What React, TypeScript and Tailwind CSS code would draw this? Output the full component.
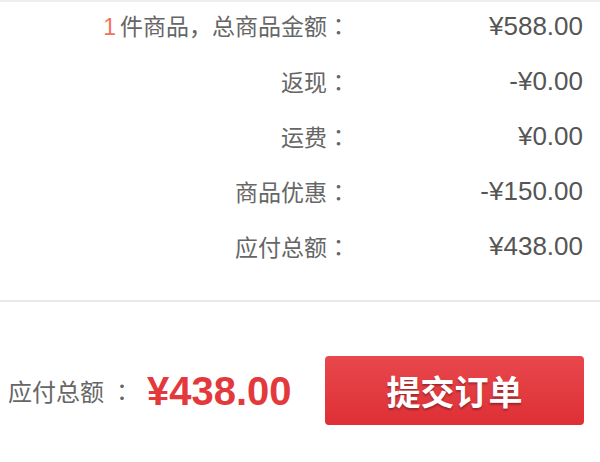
import React from "react";

const Colon = ({ className = "" }: { className?: string }) => (
  <span className={`font-['Noto_Sans_CJK_JP',sans-serif] ${className}`}>：</span>
);

const rows: { label: React.ReactNode; value: string }[] = [
  {
    label: (
      <>
        <span className="text-[#f4725c] font-['Liberation_Sans',sans-serif] mr-[4px]">1</span>
        件商品，总商品金额<Colon />
      </>
    ),
    value: "¥588.00",
  },
  { label: <>返现<Colon /></>, value: "-¥0.00" },
  { label: <>运费<Colon /></>, value: "¥0.00" },
  { label: <>商品优惠<Colon /></>, value: "-¥150.00" },
  { label: <>应付总额<Colon /></>, value: "¥438.00" },
];

export default function App() {
  return (
    <div className="w-[600px] h-[462px] bg-white border-t-2 border-[#eeeeee] font-['Noto_Sans_CJK_SC',sans-serif]">
      <div className="flex flex-col">
        {rows.map((r, i) => (
          <div key={i} className="flex h-[55px] pb-[7px] items-center">
            <div className="w-[350px] text-right text-[23px] leading-none text-[#666666] whitespace-nowrap">
              {r.label}
            </div>
            <div className="flex-1 text-right pr-[17px] text-[26px] leading-none text-[#555555] font-['Liberation_Sans',sans-serif]">
              {r.value}
            </div>
          </div>
        ))}
      </div>

      <div className="mt-[23px] border-t-2 border-[#e8e8e8]" />

      <div className="flex items-center pt-[54px] pl-[8px] pr-[16px]">
        <span className="text-[24px] leading-none text-[#666666] whitespace-nowrap">
          应付总额<Colon className="ml-[6px]" />
        </span>
        <span className="ml-[13px] text-[40px] leading-none font-bold text-[#e4393c] font-['Liberation_Sans',sans-serif]">
          ¥438.00
        </span>
        <button className="ml-auto w-[259px] h-[69px] rounded-[4px] bg-gradient-to-b from-[#e8474c] to-[#de2f35] text-white text-[34px] font-bold leading-none [text-shadow:0_2px_2px_rgba(0,0,0,0.3)]">
          提交订单
        </button>
      </div>
    </div>
  );
}
